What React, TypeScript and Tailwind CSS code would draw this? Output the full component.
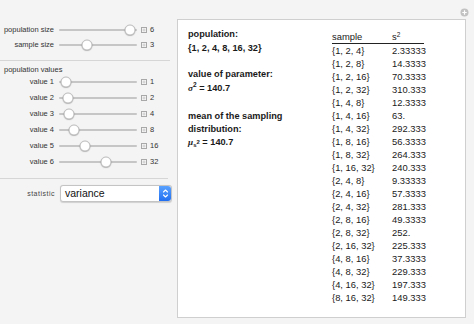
import React from "react";

const rows: [string, string][] = [
  ["{1, 2, 4}", "2.33333"],
  ["{1, 2, 8}", "14.3333"],
  ["{1, 2, 16}", "70.3333"],
  ["{1, 2, 32}", "310.333"],
  ["{1, 4, 8}", "12.3333"],
  ["{1, 4, 16}", "63."],
  ["{1, 4, 32}", "292.333"],
  ["{1, 8, 16}", "56.3333"],
  ["{1, 8, 32}", "264.333"],
  ["{1, 16, 32}", "240.333"],
  ["{2, 4, 8}", "9.33333"],
  ["{2, 4, 16}", "57.3333"],
  ["{2, 4, 32}", "281.333"],
  ["{2, 8, 16}", "49.3333"],
  ["{2, 8, 32}", "252."],
  ["{2, 16, 32}", "225.333"],
  ["{4, 8, 16}", "37.3333"],
  ["{4, 8, 32}", "229.333"],
  ["{4, 16, 32}", "197.333"],
  ["{8, 16, 32}", "149.333"],
];

function PlusBox() {
  return (
    <svg width="6" height="6" viewBox="0 0 6 6" className="shrink-0">
      <rect x="0.5" y="0.5" width="5" height="5" fill="none" stroke="#a8a8a8" strokeWidth="1" />
      <path d="M3 1.5V4.5M1.5 3H4.5" stroke="#c4c4c4" strokeWidth="0.8" />
    </svg>
  );
}

function Slider({ label, pos, value, h }: { label: string; pos: number; value: string; h: string }) {
  return (
    <div className={`flex items-center ${h}`}>
      <div className="w-[54px] text-right text-[7.5px] leading-none text-[#333] whitespace-nowrap">{label}</div>
      <div className="relative ml-[5px] h-[2px] w-[78px] rounded-full bg-[#c6c6c6]">
        <div
          className="absolute top-1/2 h-[11px] w-[11px] -translate-x-1/2 -translate-y-1/2 rounded-full border border-[#bdbdbd] bg-white shadow-[0_0.5px_1px_rgba(0,0,0,0.25)]"
          style={{ left: pos }}
        />
      </div>
      <div className="ml-[4px]">
        <PlusBox />
      </div>
      <div className="ml-[3px] text-[7.5px] leading-none text-[#333]">{value}</div>
    </div>
  );
}

export default function App() {
  return (
    <div
      className="flex h-[324px] w-[474px] overflow-hidden bg-[#f4f4f4]"
      style={{ fontFamily: '"Liberation Sans", Arial, sans-serif' }}
    >
      <div className="flex w-[175px] shrink-0 flex-col pt-[22px]">
        <Slider label="population size" pos={71} value="6" h="h-[15px]" />
        <Slider label="sample size" pos={28} value="3" h="h-[15px]" />
        <div className="mt-[8px] h-px w-[170px] bg-[#d6d6d6]" />
        <div className="mt-[4px] h-[9px] pl-[4px] text-[7.5px] leading-[9px] text-[#333]">population values</div>
        <Slider label="value 1" pos={7} value="1" h="h-[16px]" />
        <Slider label="value 2" pos={9} value="2" h="h-[16px]" />
        <Slider label="value 3" pos={10} value="4" h="h-[16px]" />
        <Slider label="value 4" pos={15} value="8" h="h-[16px]" />
        <Slider label="value 5" pos={26} value="16" h="h-[16px]" />
        <Slider label="value 6" pos={47} value="32" h="h-[16px]" />
        <div className="mt-[8px] h-px w-[168px] bg-[#d6d6d6]" />
        <div className="mt-[6px] flex h-[17px] items-center">
          <div className="w-[55px] text-right text-[7px] leading-none tracking-[0.5px] text-[#444]">statistic</div>
          <div className="ml-[5px] flex h-[17px] w-[112px] items-stretch rounded-[3px] border border-[#c4c4c4] bg-white shadow-[0_0.5px_1px_rgba(0,0,0,0.15)]">
            <div className="flex flex-1 items-center pl-[4px] text-[10.5px] leading-none text-[#111]">variance</div>
            <div className="flex w-[12px] items-center justify-center rounded-r-[3px] bg-gradient-to-b from-[#5aa2ff] to-[#1f6ef0]">
              <svg width="7" height="11" viewBox="0 0 7 11">
                <path d="M1.5 4L3.5 2L5.5 4M1.5 7L3.5 9L5.5 7" fill="none" stroke="white" strokeWidth="1.1" strokeLinecap="round" strokeLinejoin="round" />
              </svg>
            </div>
          </div>
        </div>
      </div>

      <div className="flex flex-1 flex-col">
        <div className="flex h-[19px] justify-end pr-[5px] pt-[8px]">
          <svg width="9" height="9" viewBox="0 0 9 9">
            <circle cx="4.5" cy="4.5" r="4" fill="#c2c2c2" />
            <path d="M4.5 2.3V6.7M2.3 4.5H6.7" stroke="white" strokeWidth="1.2" />
          </svg>
        </div>
        <div className="ml-[2px] flex h-[299px] w-[289px] border border-[#cfcfcf] bg-white">
          <div className="w-[154px] pl-[10px] pt-[7px] text-[9.2px] font-bold text-[#1a1a1a]">
            <div className="h-[14px] leading-[14px]">population:</div>
            <div className="h-[14px] leading-[14px]">{"{1, 2, 4, 8, 16, 32}"}</div>
            <div className="mt-[11.5px] h-[14px] leading-[14px]">value of parameter:</div>
            <div className="h-[14px] leading-[14px]">
              <span className="italic" style={{ fontFamily: '"Liberation Serif", serif' }}>σ</span>
              <sup className="text-[6.5px]">2</sup> = 140.7
            </div>
            <div className="mt-[15px] h-[13px] leading-[13px]">mean of the sampling</div>
            <div className="h-[13px] leading-[13px]">distribution:</div>
            <div className="h-[13px] leading-[13px]">
              <span className="italic" style={{ fontFamily: '"Liberation Serif", serif' }}>μ</span>
              <span className="relative top-[2px] text-[6px]">s</span>
              <span className="relative -top-[1px] text-[6px]">2</span> = 140.7
            </div>
          </div>
          <div className="pt-[10px] text-[9.4px] text-[#1a1a1a]">
            <div className="flex h-[14px] w-[92px] items-center border-b border-[#222] leading-[13px]">
              <div className="w-[60px]">sample</div>
              <div>
                s<sup className="text-[6.5px]">2</sup>
              </div>
            </div>
            {rows.map(([s, v]) => (
              <div key={s} className="flex h-[13px] items-center leading-[13px]">
                <div className="w-[60px]">{s}</div>
                <div>{v}</div>
              </div>
            ))}
          </div>
        </div>
      </div>
    </div>
  );
}
